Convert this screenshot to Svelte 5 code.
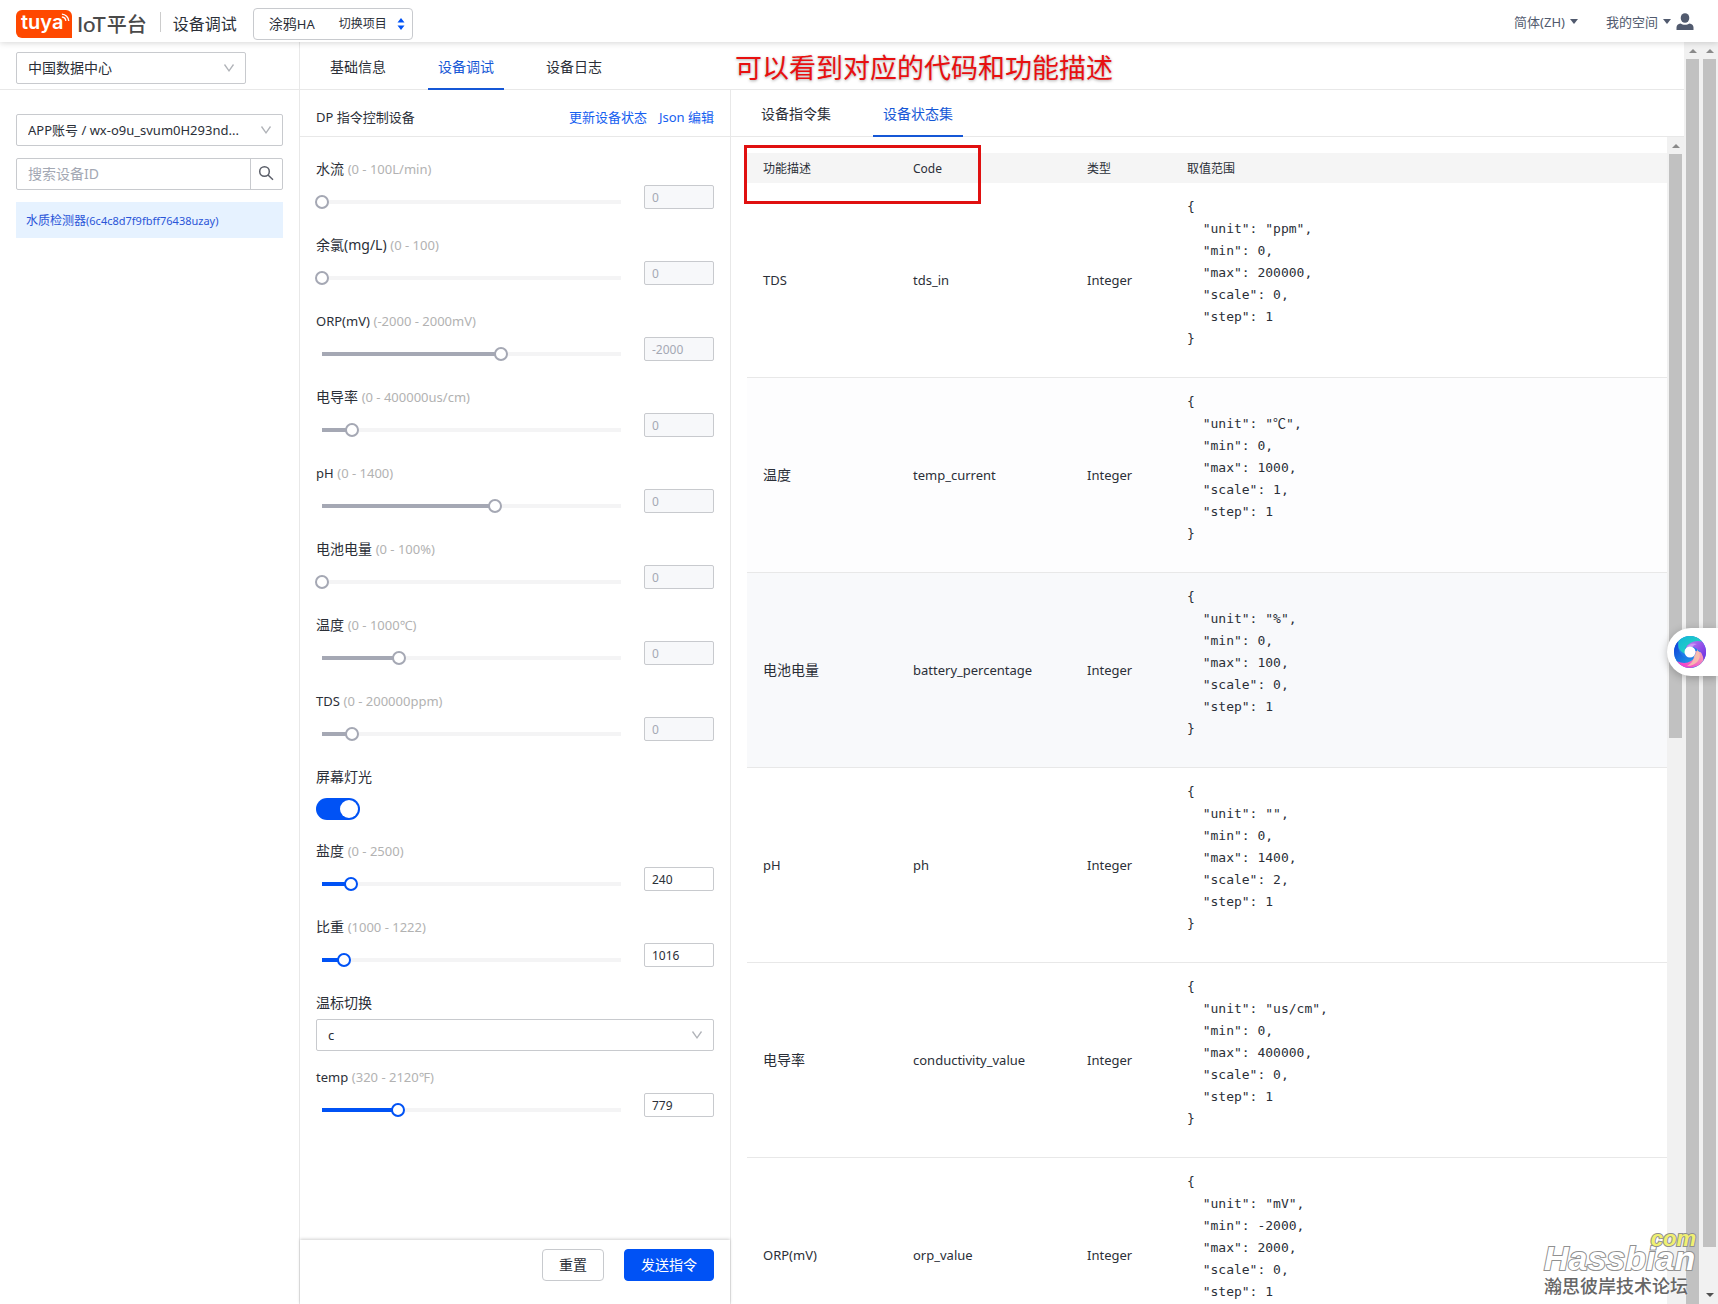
<script>
  let search = $state('');
  let light = $state(true);

  let controls = $state([
    { id: 'flow', name: '水流', range: '(0 - 100L/min)', min: 0, max: 100, pos: 0, value: '0', readonly: true },
    { id: 'cl', name: '余氯(mg/L)', range: '(0 - 100)', min: 0, max: 100, pos: 0, value: '0', readonly: true },
    { id: 'orp', name: 'ORP(mV)', range: '(-2000 - 2000mV)', min: -2000, max: 2000, pos: 400, value: '-2000', readonly: true },
    { id: 'ec', name: '电导率', range: '(0 - 400000us/cm)', min: 0, max: 400000, pos: 40000, value: '0', readonly: true },
    { id: 'ph', name: 'pH', range: '(0 - 1400)', min: 0, max: 1400, pos: 808, value: '0', readonly: true },
    { id: 'battery', name: '电池电量', range: '(0 - 100%)', min: 0, max: 100, pos: 0, value: '0', readonly: true },
    { id: 'wtemp', name: '温度', range: '(0 - 1000℃)', min: 0, max: 1000, pos: 256, value: '0', readonly: true },
    { id: 'tds', name: 'TDS', range: '(0 - 200000ppm)', min: 0, max: 200000, pos: 20000, value: '0', readonly: true },
    { id: 'light', type: 'switch', name: '屏幕灯光' },
    { id: 'salt', name: '盐度', range: '(0 - 2500)', min: 0, max: 2500, pos: 240, value: '240' },
    { id: 'sg', name: '比重', range: '(1000 - 1222)', min: 1000, max: 1222, pos: 1016, value: '1016' },
    { id: 'unit', type: 'select', name: '温标切换' },
    { id: 'temp', name: 'temp', range: '(320 - 2120℉)', min: 320, max: 2120, pos: 779, value: '779' }
  ]);

  const status = [
    { name: 'TDS', code: 'tds_in', spec: { unit: 'ppm', min: 0, max: 200000, scale: 0, step: 1 } },
    { name: '温度', code: 'temp_current', spec: { unit: '℃', min: 0, max: 1000, scale: 1, step: 1 } },
    { name: '电池电量', code: 'battery_percentage', spec: { unit: '%', min: 0, max: 100, scale: 0, step: 1 } },
    { name: 'pH', code: 'ph', spec: { unit: '', min: 0, max: 1400, scale: 2, step: 1 } },
    { name: '电导率', code: 'conductivity_value', spec: { unit: 'us/cm', min: 0, max: 400000, scale: 0, step: 1 } },
    { name: 'ORP(mV)', code: 'orp_value', spec: { unit: 'mV', min: -2000, max: 2000, scale: 0, step: 1 } }
  ];

  const isLatin = (s) => /^[\x00-\x7f]+$/.test(s);
  const percent = (c) => ((c.pos - c.min) / (c.max - c.min)) * 100;
</script>

{#snippet chevron()}
  <svg class="chevron" viewBox="0 0 12 12" aria-hidden="true"><path d="M1.5 2.5 6 8.8l4.5-6.3" /></svg>
{/snippet}

<div class="page">
  <header class="top">
    <a class="logo" href="/" aria-label="tuya IoT平台">
      <span class="badge">
        <span class="tuya">tuya</span>
        <svg class="waves" viewBox="0 0 10 10" aria-hidden="true">
          <path d="M1 1.2a8 8 0 0 1 7.6 7.6M1 4.4a4.8 4.8 0 0 1 4.4 4.4" />
        </svg>
      </span>
      <span class="iot">IoT</span><span class="platform">平台</span>
    </a>
    <span class="divider"></span>
    <h1>设备调试</h1>
    <button class="project">
      <span class="project-name">涂鸦<span class="latin">HA</span></span>
      <span class="project-switch">切换项目</span>
      <svg width="8" height="12" viewBox="0 0 8 12" aria-hidden="true"><path d="M4 0 7.5 4.5h-7zM4 12 .5 7.5h7z" fill="#0052f5" /></svg>
    </button>
    <div class="account">
      <button>简体(ZH)<span class="caret"></span></button>
      <button class="space">我的空间<span class="caret"></span>
        <svg width="18" height="18" viewBox="0 0 18 18" aria-hidden="true">
          <ellipse cx="9" cy="5" rx="4.3" ry="4.8" />
          <path d="M.5 17v-2.500c0-2.300 1.600-3.700 4-4.100 1.300.900 2.800 1.300 4.500 1.300s3.200-.4 4.500-1.300c2.400.4 4 1.800 4 4.100V17z" />
        </svg>
      </button>
    </div>
  </header>

  <div class="content">
    <main>
      <div class="bar">
        <div class="bar-side">
          <div class="select region">
            <select aria-label="数据中心"><option>中国数据中心</option></select>
            {@render chevron()}
          </div>
        </div>
        <nav class="tabs">
          <a href="#info">基础信息</a>
          <a href="#debug" class="active">设备调试</a>
          <a href="#log">设备日志</a>
        </nav>
        <div class="note">可以看到对应的代码和功能描述</div>
      </div>

      <div class="columns">
        <aside>
          <div class="select">
            <select class="latin" aria-label="账号"><option>APP账号 / wx-o9u_svum0H293nd...</option></select>
            {@render chevron()}
          </div>
          <form class="search">
            <input placeholder="搜索设备ID" aria-label="搜索设备ID" bind:value={search} />
            <button type="button" aria-label="搜索">
              <svg width="16" height="16" viewBox="0 0 16 16" aria-hidden="true"><circle cx="6.5" cy="6.5" r="4.800" /><path d="m10 10 5 4.800" /></svg>
            </button>
          </form>
          <a class="device" href="#device">水质检测器<span class="device-id">(6c4c8d7f9fbff76438uzay)</span></a>
        </aside>

        <section class="debug">
          <div class="sub-head">
            <h2>DP 指令控制设备</h2>
            <div class="links"><a href="#refresh">更新设备状态</a><a href="#json">Json 编辑</a></div>
          </div>
          <div class="controls">
            {#each controls as c}
              <div class="field {c.type ?? 'slide'}">
                <label for={c.id}><span class:latin={isLatin(c.name)}>{c.name}</span>
                  {#if c.range}<span class="range">{c.range}</span>{/if}
                </label>
                {#if c.type === 'switch'}
                  <input id={c.id} class="toggle" type="checkbox" role="switch" bind:checked={light} />
                {:else if c.type === 'select'}
                  <div class="select">
                    <select id={c.id} class="latin"><option>c</option></select>
                    {@render chevron()}
                  </div>
                {:else}
                  <div class="row">
                    <input id={c.id} type="range" min={c.min} max={c.max} bind:value={c.pos} disabled={c.readonly} style="--pos: {percent(c)}%" />
                    <input class="number" aria-label={c.name} bind:value={c.value} disabled={c.readonly} />
                  </div>
                {/if}
              </div>
            {/each}
          </div>
          <footer>
            <button>重置</button>
            <button class="primary">发送指令</button>
          </footer>
        </section>

        <section class="status">
          <nav class="tabs inner">
            <a href="#commands">设备指令集</a>
            <a href="#status" class="active">设备状态集</a>
          </nav>
          <div class="status-body">
            <div class="table-wrap">
              <div class="mark"></div>
              <table>
                <thead>
                  <tr><th class="c-name">功能描述</th><th class="c-code">Code</th><th class="c-type">类型</th><th>取值范围</th></tr>
                </thead>
                <tbody>
                  {#each status as s, i}
                    <tr class:tint={i === 1} class:hovered={i === 2}>
                      <td class:latin={isLatin(s.name)}>{s.name}</td>
                      <td class="latin">{s.code}</td>
                      <td class="latin">Integer</td>
                      <td><pre>{JSON.stringify(s.spec, null, 2)}</pre></td>
                    </tr>
                  {/each}
                </tbody>
              </table>
            </div>
            <div class="scroll"><i class="up"></i><span class="thumb short"></span></div>
          </div>
        </section>
      </div>
    </main>
    <div class="scroll"><i class="up"></i><span class="thumb"></span></div>
    <div class="scroll"><i class="up"></i><span class="thumb"></span><i class="down"></i></div>
  </div>

  <button class="assistant" aria-label="助手">
    <svg width="32" height="32" viewBox="-16 -16 32 32" aria-hidden="true">
      <defs>
        <linearGradient id="g1" x1="0" y1="0" x2="1" y2="1"><stop offset="0" stop-color="#12b5d8" /><stop offset="1" stop-color="#2de0b8" /></linearGradient>
        <linearGradient id="g2" x1="0" y1="0" x2="1" y2="1"><stop offset="0" stop-color="#c784f5" /><stop offset="1" stop-color="#6a2be0" /></linearGradient>
        <linearGradient id="g3" x1="1" y1="0" x2="0" y2="1"><stop offset="0" stop-color="#f7b7b0" /><stop offset="1" stop-color="#f22ad0" /></linearGradient>
        <linearGradient id="g4" x1="0" y1="0" x2="1" y2="1"><stop offset="0" stop-color="#1238d8" /><stop offset="1" stop-color="#1ca4e8" /></linearGradient>
      </defs>
      <circle r="16" fill="#1f7cea" />
      <path d="M-13 9.300A16 16 0 0 1-12-10.600Q-13-1-7 4-2 9 5 6 0 13-13 9.300" fill="url(#g4)" />
      <path d="M15 5A16 16 0 0 1-13 9.300Q-5 13 1 9 7 5 5-1 13-1 15 5" fill="url(#g3)" />
      <path d="M6-14.800A16 16 0 0 1 13.500 8.600Q13 0 7-3 2-7-4-5-2-14 6-14.800" fill="url(#g2)" />
      <path d="M-11-11.600A16 16 0 0 1 12-10.600Q4-12-1-8-6-5-5 2-14-2-11-11.600" fill="url(#g1)" />
      <path d="M4 4Q8 0 7-3 12 3 8 9 4 14-3 14 4 10 4 4" fill="#f8c4ae" opacity=".85" />
      <path d="M-4-4Q0-10 7-8 3-7 2-4" fill="#d09cf8" opacity=".85" />
      <circle r="5.5" fill="#fff" />
    </svg>
  </button>

  <div class="watermark">
    <span class="site">Hassbian</span>
    <span class="com">com</span>
    <span class="forum">瀚思彼岸技术论坛</span>
  </div>
</div>

<style>
  :global(body) {
    margin: 0;
    background: #fff;
  }
  .page {
    --blue: #0052f5;
    --line: #e8e8e8;
    --border: #c8cace;
    position: relative;
    display: flex;
    flex-direction: column;
    height: 100vh;
    overflow: hidden;
    font: 14px/22px 'Noto Sans', 'Noto Sans CJK SC', sans-serif;
    color: #2b2f38;
  }
  .page * {
    box-sizing: border-box;
  }
  button, input, select {
    font: inherit;
    color: inherit;
    margin: 0;
  }
  a {
    color: inherit;
    text-decoration: none;
  }
  .latin {
    font-size: 13px;
  }

  /* header */
  .top {
    position: relative;
    z-index: 2;
    display: flex;
    flex: none;
    align-items: center;
    height: 42px;
    padding: 6px 24px 0 16px;
    background: #fff;
    box-shadow: 0 1px 6px rgba(0, 0, 0, 0.16);
  }
  .logo {
    display: flex;
    align-items: center;
    color: #4a4a4a;
  }
  .badge {
    position: relative;
    width: 56px;
    height: 28px;
    padding-left: 5px;
    border-radius: 6px 6px 0 6px;
    background: #ff4800;
    color: #fff;
  }
  .tuya {
    font: 600 20px/24px Inter, sans-serif;
  }
  .waves {
    position: absolute;
    top: 3px;
    right: 2px;
    width: 9px;
    height: 9px;
    fill: none;
    stroke: #fff;
    stroke-width: 1.5;
  }
  .iot {
    margin-left: 5px;
    font: 500 22px/28px Lato, sans-serif;
  }
  .platform {
    margin-left: 1px;
    font: 500 20px/28px 'Noto Sans CJK SC', sans-serif;
  }
  .divider {
    width: 1px;
    height: 20px;
    margin: 0 12px 4px 13px;
    background: #ccc;
  }
  h1 {
    margin: 0;
    font-size: 16px;
    font-weight: 400;
  }
  .project {
    display: flex;
    align-items: center;
    width: 160px;
    height: 32px;
    margin-left: 16px;
    padding: 0 7px 0 15px;
    border: 1px solid var(--border);
    border-radius: 4px;
    background: #fff;
  }
  .project-switch {
    margin: 0 10px 0 auto;
    font-size: 12px;
  }
  .account {
    display: flex;
    gap: 28px;
    margin: 0 0 5px auto;
  }
  .account button {
    display: flex;
    align-items: center;
    padding: 0;
    border: 0;
    background: none;
    font-size: 13px;
    color: #515a6e;
  }
  .account svg {
    margin-left: 5px;
    fill: #515a6e;
  }
  .caret {
    margin-left: 5px;
    border: 4px solid transparent;
    border-top: 5px solid #515a6e;
    border-bottom: 0;
  }

  /* layout */
  .content {
    display: flex;
    flex: 1;
    min-height: 0;
  }
  main {
    display: flex;
    flex: 1;
    flex-direction: column;
    min-width: 0;
  }
  .bar {
    position: relative;
    display: flex;
    flex: none;
    height: 48px;
    border-bottom: 1px solid var(--line);
  }
  .bar-side {
    width: 300px;
    padding: 10px 16px 0;
    border-right: 1px solid var(--line);
  }
  .columns {
    display: flex;
    flex: 1;
    min-height: 0;
  }
  aside {
    display: flex;
    flex-direction: column;
    gap: 12px;
    width: 300px;
    padding: 24px 16px;
    border-right: 1px solid var(--line);
  }

  .select {
    position: relative;
    width: 100%;
  }
  .region {
    width: 230px;
  }
  select {
    display: block;
    width: 100%;
    height: 32px;
    padding: 0 30px 0 11px;
    border: 1px solid var(--border);
    border-radius: 2px;
    background: #fff;
    appearance: none;
  }
  .chevron {
    position: absolute;
    top: 10px;
    right: 11px;
    width: 12px;
    height: 12px;
    fill: none;
    stroke: #b0b3b8;
    stroke-width: 1.3;
    pointer-events: none;
  }
  .search {
    display: flex;
    height: 32px;
    border: 1px solid var(--border);
    border-radius: 2px;
  }
  .search input {
    flex: 1;
    min-width: 0;
    padding: 0 11px;
    border: 0;
    background: none;
  }
  .search input::placeholder {
    color: #a3a8b3;
  }
  .search button {
    display: flex;
    align-items: center;
    justify-content: center;
    width: 32px;
    padding: 0 2px 2px 0;
    border: 0;
    border-left: 1px solid var(--border);
    background: none;
  }
  .search svg {
    fill: none;
    stroke: #5a5e68;
    stroke-width: 1.5;
  }
  .device {
    padding: 8px 10px 6px;
    background: #e6f2ff;
    font-size: 12px;
    color: #2a55d8;
  }
  .device-id {
    font-size: 11px;
  }

  .tabs {
    display: flex;
    gap: 32px;
    padding-left: 20px;
  }
  .tabs a {
    height: 48px;
    padding: 14px 10px 0;
    line-height: 22px;
  }
  .tabs .active {
    border-bottom: 2px solid #1557d6;
    color: #1557d6;
  }
  .tabs.inner {
    flex: none;
    height: 47px;
    border-bottom: 1px solid var(--line);
  }
  .tabs.inner a {
    height: 47px;
    padding-top: 13px;
  }

  /* device controls */
  .debug {
    display: flex;
    flex-direction: column;
    width: 431px;
    border-right: 1px solid var(--line);
  }
  .sub-head {
    display: flex;
    flex: none;
    align-items: center;
    justify-content: space-between;
    height: 47px;
    padding: 7px 16px 0;
    border-bottom: 1px solid var(--line);
    font-size: 13px;
  }
  h2 {
    margin: 0;
    font-size: 13px;
    font-weight: 400;
  }
  .links {
    display: flex;
    gap: 12px;
    color: #1560f0;
  }
  .controls {
    flex: 1;
    min-height: 0;
    padding: 21px 16px 0;
    overflow: hidden;
  }
  .field {
    margin-bottom: 25px;
  }
  .field.switch {
    margin-bottom: 20px;
  }
  .field.select {
    margin-bottom: 15px;
  }
  .field label {
    display: block;
    height: 22px;
    margin-bottom: 5px;
  }
  .range {
    font-size: 13px;
    color: #b2b2b2;
  }
  .row {
    display: flex;
    justify-content: space-between;
    height: 24px;
  }
  input[type='range'] {
    --fill: var(--blue);
    flex: 1;
    height: 14px;
    margin: 10px 16px 0 -1px;
    background:
      linear-gradient(to right, var(--fill) var(--pos), #f4f4f5 var(--pos)) center / calc(100% - 14px) 4px no-repeat;
    appearance: none;
  }
  input[type='range']:disabled {
    --fill: #a5a8b4;
  }
  input[type='range']::-webkit-slider-thumb {
    width: 14px;
    height: 14px;
    border: 2px solid var(--fill);
    border-radius: 50%;
    background: #fff;
    appearance: none;
  }
  .number {
    width: 70px;
    height: 24px;
    padding: 0 7px;
    border: 1px solid var(--border);
    border-radius: 2px;
    background: #fff;
    font-size: 12px;
  }
  .number:disabled {
    background: #f7f8fa;
    color: #a5a8b4;
  }
  .toggle {
    display: block;
    width: 44px;
    height: 22px;
    margin-top: 10px;
    padding: 2px;
    border-radius: 11px;
    background: #b8bcc6;
    appearance: none;
  }
  .toggle::before {
    content: '';
    display: block;
    width: 18px;
    height: 18px;
    border-radius: 50%;
    background: #fff;
  }
  .toggle:checked {
    background: var(--blue);
  }
  .toggle:checked::before {
    margin-left: auto;
  }
  footer {
    display: flex;
    flex: none;
    gap: 20px;
    justify-content: flex-end;
    height: 64px;
    padding: 9px 16px 0;
    box-shadow: 0 -1px 3px rgba(0, 0, 0, 0.18);
  }
  footer button {
    height: 32px;
    padding: 0 16px;
    border: 1px solid var(--border);
    border-radius: 4px;
    background: #fff;
  }
  footer .primary {
    border-color: var(--blue);
    background: var(--blue);
    color: #fff;
  }

  /* status table */
  .status {
    display: flex;
    flex: 1;
    flex-direction: column;
    min-width: 0;
  }
  .status-body {
    display: flex;
    flex: 1;
    min-height: 0;
  }
  .table-wrap {
    position: relative;
    flex: 1;
    padding: 16px 0 0 16px;
    overflow-y: auto;
    scrollbar-width: none;
  }
  table {
    width: 100%;
    border-collapse: collapse;
    table-layout: fixed;
  }
  th {
    height: 30px;
    padding: 2px 16px 0;
    background: #f5f5f5;
    font-size: 12px;
    font-weight: 400;
    text-align: left;
  }
  .c-name {
    width: 150px;
  }
  .c-code {
    width: 174px;
  }
  .c-type {
    width: 100px;
  }
  td {
    padding: 0 16px;
    border-bottom: 1px solid var(--line);
  }
  .tint {
    background: #fdfdfe;
  }
  .hovered {
    background: #f8f9fb;
  }
  pre {
    margin: 0;
    padding: 13px 0 27px;
    font: 13px/22px 'DejaVu Sans Mono', 'Noto Sans CJK SC', monospace;
  }

  .scroll {
    display: flex;
    flex: none;
    flex-direction: column;
    align-items: center;
    width: 17px;
    background: #f1f1f1;
  }
  .thumb {
    flex: 1;
    width: 13px;
    background: #c1c1c1;
  }
  .thumb.short {
    flex: 0 0 50%;
  }
  .up, .down {
    flex: none;
    margin: 7px 0 6px;
    border: 4px solid transparent;
    border-top: 0;
    border-bottom: 4px solid #8a8a8a;
  }
  .down {
    margin: 46px 0 7px;
    border-top: 4px solid #505050;
    border-bottom: 0;
  }

  /* overlays */
  .note {
    position: absolute;
    top: 8px;
    left: 735px;
    font-size: 27px;
    line-height: 36px;
    color: #e81010;
    text-shadow: 0 1px 3px rgba(0, 0, 0, 0.35);
    white-space: nowrap;
  }
  .mark {
    position: absolute;
    top: 8px;
    left: 13px;
    width: 237px;
    height: 59px;
    border: 3px solid #e01010;
  }
  .assistant {
    position: absolute;
    top: 628px;
    right: 0;
    z-index: 3;
    width: 51px;
    height: 48px;
    padding: 0 0 0 7px;
    border: 0;
    border-radius: 24px 0 0 24px;
    background: #fff;
    box-shadow: 0 2px 8px rgba(0, 0, 0, 0.25);
    line-height: 0;
    text-align: left;
  }
  .watermark {
    position: absolute;
    right: 22px;
    bottom: 7px;
    z-index: 3;
    display: flex;
    flex-direction: column;
    width: 152px;
    pointer-events: none;
  }
  .site, .com {
    font: italic 700 34px/30px 'Liberation Sans', sans-serif;
    color: #fff;
    -webkit-text-stroke: 2px #909090;
    paint-order: stroke fill;
  }
  .com {
    position: absolute;
    top: -15px;
    right: 0;
    font-size: 22px;
    line-height: 22px;
    color: #f0f070;
  }
  .forum {
    font: 500 18px/24px 'Noto Sans CJK SC', sans-serif;
    color: #666;
    text-shadow: 0 0 2px #fff;
  }
</style>
